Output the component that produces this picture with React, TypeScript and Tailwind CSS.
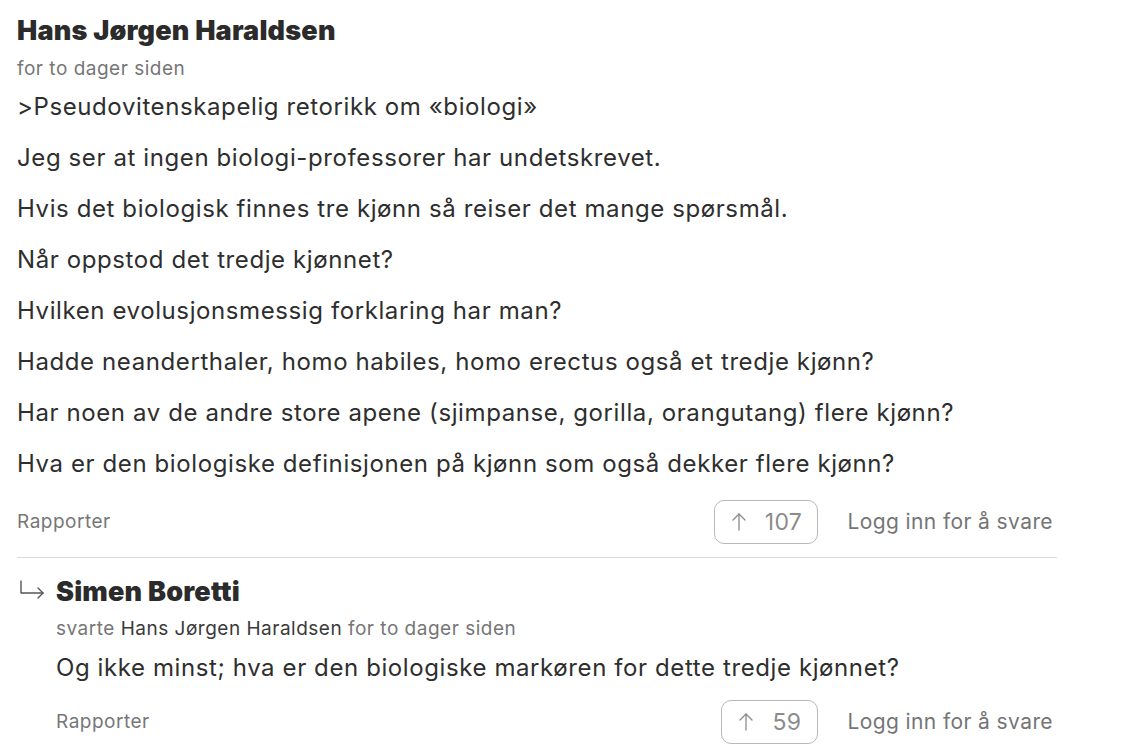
import React from "react";

const body = [
  ">Pseudovitenskapelig retorikk om «biologi»",
  "Jeg ser at ingen biologi-professorer har undetskrevet.",
  "Hvis det biologisk finnes tre kjønn så reiser det mange spørsmål.",
  "Når oppstod det tredje kjønnet?",
  "Hvilken evolusjonsmessig forklaring har man?",
  "Hadde neanderthaler, homo habiles, homo erectus også et tredje kjønn?",
  "Har noen av de andre store apene (sjimpanse, gorilla, orangutang) flere kjønn?",
  "Hva er den biologiske definisjonen på kjønn som også dekker flere kjønn?",
];

function ArrowUp() {
  return (
    <svg width="16" height="20" viewBox="0 0 16 20" fill="none" stroke="#8a8a8a" strokeWidth="1.3" strokeLinecap="round" strokeLinejoin="round">
      <path d="M8 18V2" />
      <path d="M2 8L8 2l6 6" />
    </svg>
  );
}

function ReplyArrow() {
  return (
    <svg width="28" height="20" viewBox="0 0 28 20" fill="none" stroke="#555555" strokeWidth="1.4" strokeLinecap="round" strokeLinejoin="round">
      <path d="M3 1v12h22" />
      <path d="M20 8l5 5-5 5" />
    </svg>
  );
}

function Actions({ count, btnW }: { count: string; btnW: string }) {
  return (
    <div className="flex items-center justify-between h-[44px]">
      <span className="text-[19px] tracking-[0.5px] text-[#777777]">Rapporter</span>
      <div className="flex items-center">
        <div className={`flex items-center justify-center gap-[18px] h-[44px] ${btnW} border border-[#b8b8b8] rounded-[10px] text-[23px] tracking-[0.3px] text-[#8c8c8c]`}>
          <ArrowUp />
          <span>{count}</span>
        </div>
        <span className="ml-[29px] mr-[4px] text-[21px] tracking-[0.4px] text-[#757575]">Logg inn for å svare</span>
      </div>
    </div>
  );
}

export default function App() {
  return (
    <div className="bg-white min-h-[753px] w-[1125px] text-[#2e2e2e]" style={{ fontFamily: "Inter, 'Noto Sans', sans-serif" }}>
      <div className="ml-[17px] w-[1040px] pt-[13px]">
        <div className="text-[27px] font-black leading-[36px] tracking-[0.2px] text-[#2b2b2b]">Hans Jørgen Haraldsen</div>
        <div className="text-[19px] leading-[26px] mt-[7px] tracking-[0.5px] text-[#767676]">for to dager siden</div>
        <div className="mt-[8px] flex flex-col">
          {body.map((t) => (
            <p key={t} className="text-[24px] leading-[34px] tracking-[0.6px] mb-[17px] last:mb-0">{t}</p>
          ))}
        </div>
        <div className="mt-[19px]">
          <Actions count="107" btnW="w-[104px]" />
        </div>
        <div className="mt-[13px] border-t border-[#dcdcdc]" />
        <div className="mt-[16px] flex">
          <div className="w-[39px] pt-[6px] pl-[1px]">
            <ReplyArrow />
          </div>
          <div className="flex-1">
            <div className="text-[27px] font-black leading-[36px] tracking-[0.2px] text-[#2b2b2b]">Simen Boretti</div>
            <div className="text-[19px] leading-[26px] mt-[6px] tracking-[0.5px] text-[#767676]">
              svarte <span className="text-[#3a3a3a]">Hans Jørgen Haraldsen</span> for to dager siden
            </div>
            <p className="text-[24px] leading-[34px] tracking-[0.6px] mt-[9px]">Og ikke minst; hva er den biologiske markøren for dette tredje kjønnet?</p>
            <div className="mt-[15px]">
              <Actions count="59" btnW="w-[97px]" />
            </div>
          </div>
        </div>
      </div>
    </div>
  );
}
